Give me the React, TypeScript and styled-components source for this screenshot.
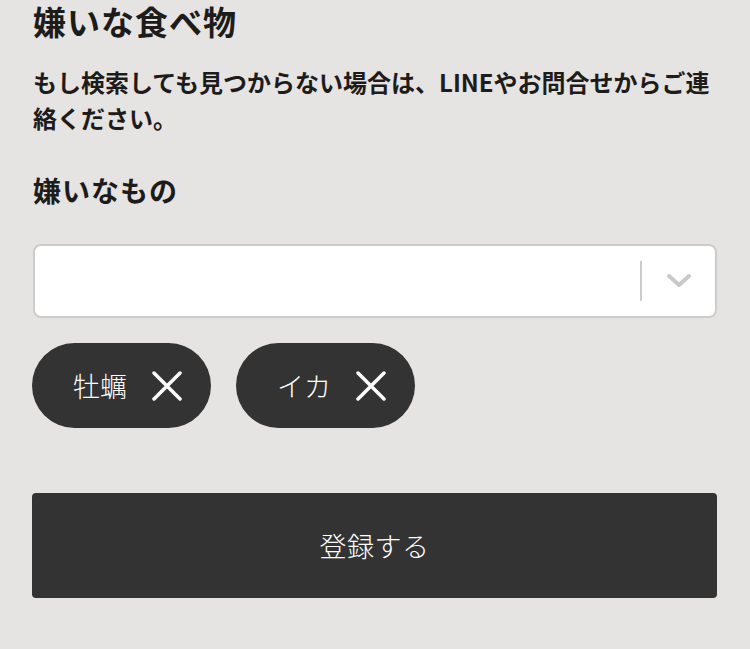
import React from "react";
import styled, { createGlobalStyle } from "styled-components";

const Global = createGlobalStyle`
  html, body {
    margin: 0;
    padding: 0;
    background: #e5e4e2;
  }
  body {
    font-family: "Noto Sans CJK JP", "Noto Sans", sans-serif;
    color: #1e1c1a;
  }
`;

const Page = styled.div`
  padding: 1px 33px 0 33px;
  display: flex;
  flex-direction: column;
`;

const Title = styled.h1`
  margin: 0;
  font-size: 33px;
  line-height: 40px;
  font-weight: 700;
  letter-spacing: 1px;
`;

const Note = styled.p`
  margin: 23px 0 0;
  font-size: 24px;
  line-height: 36px;
  font-weight: 700;
`;

const Label = styled.h2`
  margin: 34px 0 0;
  font-size: 28px;
  line-height: 40px;
  font-weight: 700;
  letter-spacing: 1px;
`;

const Select = styled.div`
  margin: 34px 0 0;
  height: 74px;
  box-sizing: border-box;
  background: #fff;
  border: 2px solid #cdcccb;
  border-radius: 8px;
  display: flex;
  align-items: center;
  justify-content: flex-end;
`;

const Separator = styled.span`
  width: 2px;
  height: 40px;
  background: #cccccc;
`;

const Indicator = styled.span`
  width: 73px;
  display: flex;
  align-items: center;
  justify-content: center;
`;

const Chips = styled.div`
  margin: 25px 0 0 -1px;
  display: flex;
  gap: 25px;
`;

const Chip = styled.div`
  height: 85px;
  box-sizing: border-box;
  background: #333333;
  border-radius: 43px;
  display: flex;
  align-items: center;
  gap: 25px;
  padding: 0 29px 0 41px;
  color: #fff;
  font-size: 27px;
  font-weight: 300;
`;

const Submit = styled.button`
  margin: 65px 0 0 -1px;
  height: 105px;
  width: calc(100% + 1px);
  border: none;
  border-radius: 4px;
  background: #333333;
  color: #fff;
  font-family: "Noto Sans CJK JP", "Noto Sans", sans-serif;
  font-size: 27px;
  font-weight: 300;
  letter-spacing: 0.5px;
`;

const Chevron = () => (
  <svg width="26" height="16" viewBox="0 0 26 16">
    <path d="M3 3 L13 12 L23 3" fill="none" stroke="#c9c9c9" strokeWidth="4" strokeLinecap="round" strokeLinejoin="round" />
  </svg>
);

const Cross = () => (
  <svg width="30" height="30" viewBox="0 0 30 30">
    <path d="M2 2 L28 28 M28 2 L2 28" fill="none" stroke="#fff" strokeWidth="3.5" strokeLinecap="round" />
  </svg>
);

const tags = ["牡蠣", "イカ"];

export default function App() {
  return (
    <>
      <Global />
      <Page>
        <Title>嫌いな食べ物</Title>
        <Note>もし検索しても見つからない場合は、LINEやお問合せからご連絡ください。</Note>
        <Label>嫌いなもの</Label>
        <Select>
          <Separator />
          <Indicator>
            <Chevron />
          </Indicator>
        </Select>
        <Chips>
          {tags.map((t) => (
            <Chip key={t}>
              <span>{t}</span>
              <Cross />
            </Chip>
          ))}
        </Chips>
        <Submit>登録する</Submit>
      </Page>
    </>
  );
}
